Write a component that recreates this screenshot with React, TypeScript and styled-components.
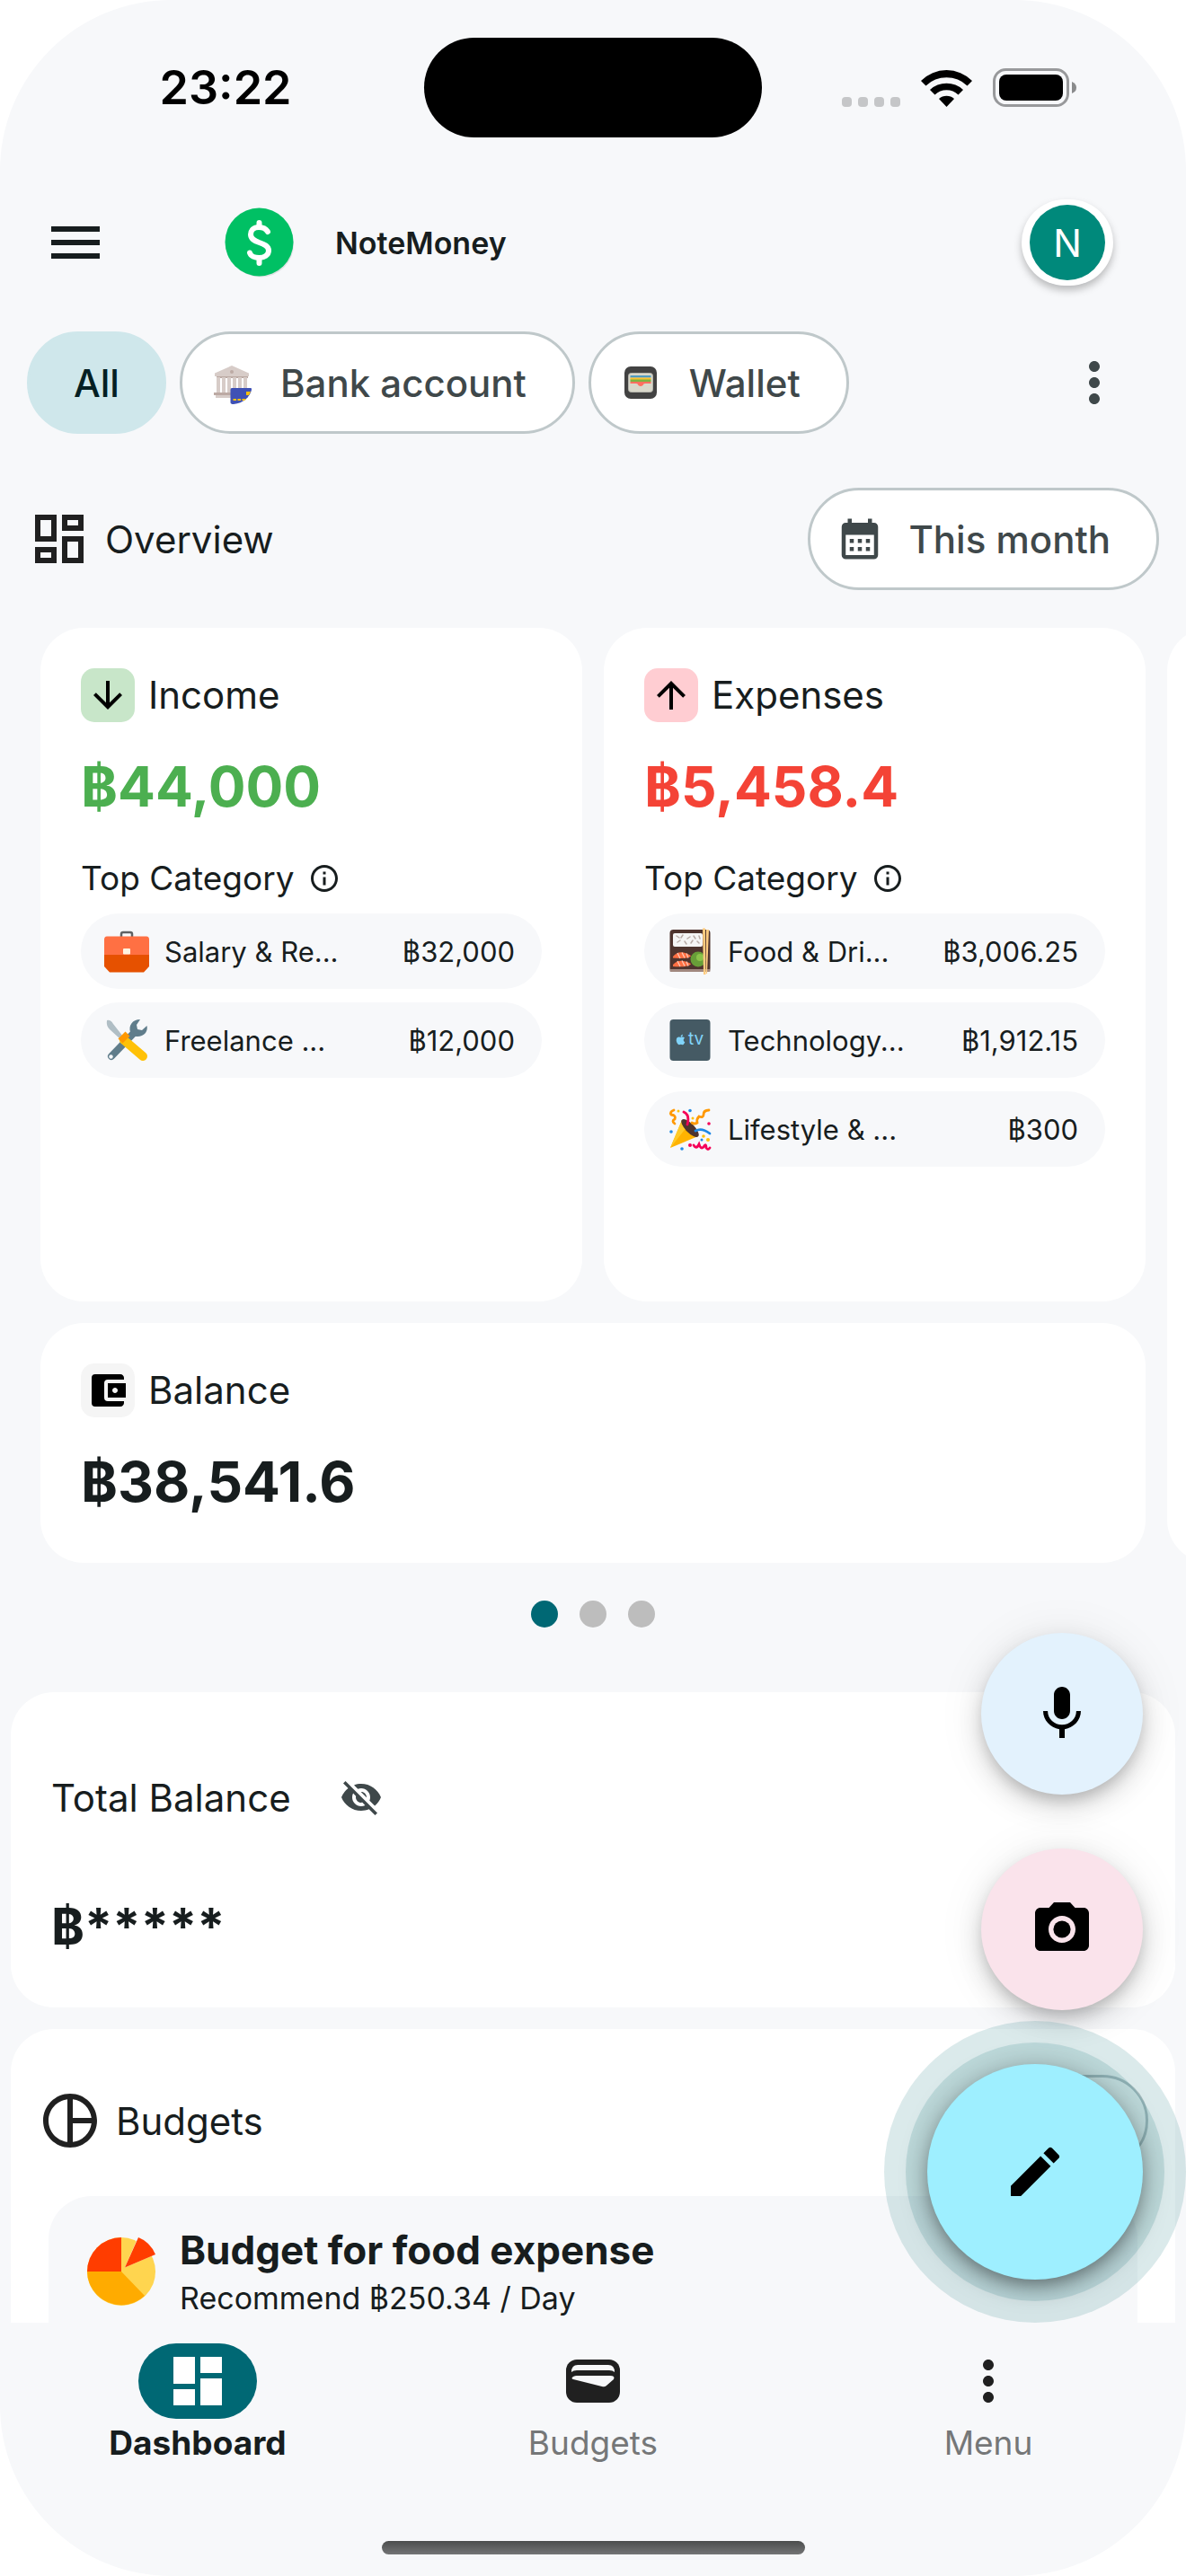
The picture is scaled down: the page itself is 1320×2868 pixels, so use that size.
import React from 'react';
import styled, { createGlobalStyle } from 'styled-components';
import {
  MdAccountBalanceWallet,
  MdArrowDownward,
  MdArrowUpward,
  MdCalendarMonth,
  MdCameraAlt,
  MdDashboard,
  MdEdit,
  MdInfoOutline,
  MdMenu,
  MdMic,
  MdMoreVert,
  MdOutlineDashboard,
  MdVisibilityOff,
} from 'react-icons/md';
import { FaApple } from 'react-icons/fa';

const color = {
  page: '#f7f8fa',
  card: '#ffffff',
  text: '#171d1e',
  muted: '#3f484a',
  faint: '#757778',
  icon: '#202020',
  outline: '#bfc8ca',
  primary: '#006874',
  income: '#4caf50',
  expense: '#f44336',
};

const GlobalStyle = createGlobalStyle`
  *, *::before, *::after { box-sizing: border-box; }
  body {
    margin: 0;
    background: #ffffff;
    color: ${color.text};
    font-family: Inter, "Noto Sans", "Liberation Sans", sans-serif;
    font-size: 42px;
  }
  h1, h2, h3, p, ul { margin: 0; padding: 0; font: inherit; }
  ul { list-style: none; }
  svg { display: block; flex: none; }
  button {
    border: 0;
    padding: 0;
    background: none;
    color: inherit;
    font: inherit;
    cursor: pointer;
  }
`;

/* ---------- shell ---------- */

const Screen = styled.div`
  display: flex;
  flex-direction: column;
  height: 100vh;
  overflow: hidden;
  border-radius: 190px;
  background: ${color.page};
`;

const StatusBar = styled.div`
  display: grid;
  grid-template-columns: 1fr 376px 1fr;
  align-items: center;
  flex: none;
  height: 194px;
`;

const Clock = styled.time`
  padding-left: 30px;
  text-align: center;
  color: #000;
  font-size: 52px;
  font-weight: 600;
`;

const Island = styled.div`
  height: 111px;
  border-radius: 56px;
  background: #000;
`;

const Signals = styled.div`
  display: flex;
  justify-content: flex-end;
  align-items: flex-end;
  gap: 23px;
  padding-right: 122px;
`;

const Header = styled.header`
  display: flex;
  align-items: center;
  flex: none;
  height: 152px;
  padding: 0 81px 0 48px;
`;

const Brand = styled.div`
  display: flex;
  align-items: center;
  gap: 45px;
  margin-left: 130px;
  font-size: 34px;
  font-weight: 600;
`;

const AvatarButton = styled.button`
  display: grid;
  place-items: center;
  width: 102px;
  height: 96px;
  margin-left: auto;
  border-radius: 48px;
  background: #fff;
  box-shadow: 0 5px 9px rgba(0, 0, 0, 0.25);
`;

const Avatar = styled.span`
  display: grid;
  place-items: center;
  width: 84px;
  height: 84px;
  border-radius: 50%;
  background: #00897b;
  color: #fff;
`;

const Body = styled.div`
  position: relative;
  display: flex;
  flex-direction: column;
  flex: 1;
  min-height: 0;
`;

const Scroller = styled.main`
  flex: 1;
  min-height: 0;
  overflow: hidden auto;
  scrollbar-width: none;
  padding-top: 23px;
`;

/* ---------- filters ---------- */

const FilterRow = styled.div`
  display: flex;
  align-items: center;
  gap: 15px;
  padding: 0 66px 0 30px;
`;

const Chip = styled.button<{ $selected?: boolean; $plain?: boolean }>`
  display: flex;
  align-items: center;
  gap: 27px;
  height: 114px;
  padding: ${(p) => (p.$plain ? '0 49px' : '0 51px 0 28px')};
  border: 3px solid ${(p) => (p.$selected ? '#cfe7eb' : color.outline)};
  border-radius: 57px;
  background: ${(p) => (p.$selected ? '#cfe7eb' : color.card)};
  color: ${(p) => (p.$selected ? '#051f23' : color.muted)};
  font-weight: 500;
  white-space: nowrap;
`;

const MoreButton = styled.button`
  margin-left: auto;
  color: ${color.muted};
`;

/* ---------- overview ---------- */

const OverviewRow = styled.div`
  display: flex;
  align-items: center;
  justify-content: space-between;
  padding: 60px 30px 42px;
`;

const SectionTitle = styled.h2`
  display: flex;
  align-items: center;
  gap: 15px;

  svg { color: ${color.icon}; }
`;

const Carousel = styled.section`
  display: flex;
  gap: 24px;
  overflow: hidden;
  padding-left: 45px;
`;

const Slide = styled.div`
  display: grid;
  grid-template-columns: 1fr 1fr;
  gap: 24px;
  flex: 0 0 calc(100% - 45px);
`;

const Card = styled.article<{ $tall?: boolean; $wide?: boolean }>`
  min-width: 0;
  min-height: ${(p) => (p.$tall ? '750px' : '0')};
  grid-column: ${(p) => (p.$wide ? '1 / -1' : 'auto')};
  padding: 45px;
  border-radius: 48px;
  background: ${color.card};
`;

const CardTitle = styled.h3`
  display: flex;
  align-items: center;
  gap: 15px;
  line-height: 60px;
`;

const IconTile = styled.span<{ $tint: string }>`
  display: grid;
  place-items: center;
  width: 60px;
  height: 60px;
  border-radius: 15px;
  background: ${(p) => p.$tint};
  color: #000;
`;

const Amount = styled.p<{ $color?: string }>`
  margin-top: 27px;
  color: ${(p) => p.$color ?? color.text};
  font-size: 62px;
  font-weight: 700;
  line-height: 90px;
`;

const TopLabel = styled.p`
  display: flex;
  align-items: center;
  gap: 15px;
  margin: 30px 0 12px;
  font-size: 37px;
  line-height: 54px;
`;

const CategoryList = styled.ul`
  display: flex;
  flex-direction: column;
  gap: 15px;
`;

const CategoryRow = styled.li`
  display: flex;
  align-items: center;
  gap: 15px;
  height: 84px;
  padding: 0 30px 0 24px;
  border-radius: 42px;
  background: ${color.page};
  font-size: 31px;
  white-space: nowrap;
`;

const CategoryAmount = styled.span`
  margin-left: auto;
`;

const Pager = styled.div`
  display: flex;
  justify-content: center;
  gap: 24px;
  padding: 42px 0 72px;
`;

const PageDot = styled.button<{ $active?: boolean }>`
  width: 30px;
  height: 30px;
  border-radius: 50%;
  background: ${(p) => (p.$active ? color.primary : '#bdbdbd')};
`;

/* ---------- panels ---------- */

const Panels = styled.div`
  display: flex;
  flex-direction: column;
  gap: 24px;
  padding: 0 12px;
`;

const TotalPanel = styled.section`
  padding: 69px 45px 45px;
  border-radius: 48px;
  background: ${color.card};
`;

const TotalTitle = styled.div`
  display: flex;
  align-items: center;
  gap: 30px;
  margin-bottom: 51px;
`;

const EyeButton = styled.button`
  padding: 24px;
  color: ${color.muted};
`;

const HiddenAmount = styled(Amount)`
  margin-top: 0;
  font-size: 56px;
`;

const BudgetPanel = styled.section`
  padding: 51px 0 42px;
  border-radius: 48px;
  background: ${color.card};
`;

const BudgetHeader = styled.div`
  display: flex;
  align-items: center;
  justify-content: space-between;
  padding: 0 30px;
`;

const AddButton = styled.button`
  width: 180px;
  height: 102px;
  border: 3px solid ${color.outline};
  border-radius: 51px;
  background: ${color.card};
`;

const BudgetItem = styled.article`
  display: flex;
  align-items: center;
  gap: 27px;
  margin: 33px 42px 0;
  padding: 30px 43px 180px;
  border-radius: 48px;
  background: ${color.page};
`;

const BudgetName = styled.h3`
  font-size: 44px;
  font-weight: 700;
  line-height: 60px;
`;

const BudgetHint = styled.p`
  font-size: 34px;
  line-height: 48px;
`;

/* ---------- floating actions ---------- */

const ActionStack = styled.div`
  position: absolute;
  right: 48px;
  bottom: 48px;
  display: flex;
  flex-direction: column;
  align-items: flex-end;
  gap: 60px;
`;

const Action = styled.button<{ $tint: string }>`
  display: grid;
  place-items: center;
  width: 180px;
  height: 180px;
  border-radius: 50%;
  background: ${(p) => p.$tint};
  color: #000;
  box-shadow:
    0 9px 15px -3px rgba(0, 0, 0, 0.16),
    0 12px 30px rgba(0, 0, 0, 0.14),
    0 3px 54px rgba(0, 0, 0, 0.08);
`;

const MainAction = styled(Action)`
  width: 240px;
  height: 240px;
  box-shadow:
    0 9px 15px -3px rgba(0, 0, 0, 0.2),
    0 6px 30px rgba(0, 0, 0, 0.36),
    0 0 0 24px rgba(0, 104, 112, 0.14),
    0 0 0 48px rgba(0, 104, 112, 0.14);
`;

/* ---------- bottom navigation ---------- */

const BottomBar = styled.footer`
  display: flex;
  flex-direction: column;
  align-items: center;
  justify-content: space-between;
  flex: none;
  height: 282px;
  padding: 23px 0 24px;
`;

const Nav = styled.nav`
  display: grid;
  grid-template-columns: repeat(3, 1fr);
  width: 100%;
`;

const NavItem = styled.a<{ $active?: boolean }>`
  display: flex;
  flex-direction: column;
  align-items: center;
  color: ${(p) => (p.$active ? color.text : color.faint)};
  font-size: 37px;
  font-weight: ${(p) => (p.$active ? 700 : 400)};
  line-height: 54px;
  text-decoration: none;
`;

const NavIcon = styled.span<{ $active?: boolean }>`
  display: grid;
  place-items: center;
  width: 132px;
  height: 84px;
  border-radius: 42px;
  background: ${(p) => (p.$active ? color.primary : 'transparent')};
  color: ${(p) => (p.$active ? '#fff' : color.icon)};
`;

const HomeIndicator = styled.div`
  width: 471px;
  height: 15px;
  border-radius: 8px;
  background: linear-gradient(#4b4d4d, #747576);
`;

/* ---------- drawings ---------- */

const CellularDots = () => (
  <svg width="65" height="11" viewBox="0 0 65 11" fill="#c5c6c8" aria-hidden="true">
    {[0, 18, 36, 54].map((x) => (
      <rect key={x} x={x} width="11" height="11" rx="4" />
    ))}
  </svg>
);

const Wifi = () => (
  <svg width="57" height="42" viewBox="0 0 57 42" aria-hidden="true">
    <path d="M0 13 A40 40 0 0 1 57 13 L51.5 18.5 A33 33 0 0 0 5.500 18.500 Z" />
    <path d="M10 23 A27 27 0 0 1 47 23 L41.500 28.500 A19 19 0 0 0 15.500 28.500 Z" />
    <path d="M20 33 A13 13 0 0 1 37 33 L28.500 42 Z" />
  </svg>
);

const Battery = () => (
  <svg width="93" height="43" viewBox="0 0 93 43" aria-hidden="true">
    <rect x="1.500" y="1.500" width="82" height="40" rx="13" fill="none" stroke="#98999b" strokeWidth="3" />
    <rect x="7" y="7" width="71" height="29" rx="8" />
    <path d="M88 15 Q93 17 93 21.500 Q93 26 88 28 Z" fill="#8a8b8c" />
  </svg>
);

const Logo = () => (
  <svg width="78" height="78" viewBox="0 0 78 78" aria-hidden="true">
    <circle cx="40" cy="40.500" r="37" fill="#dfe1e3" />
    <circle cx="38.500" cy="38.500" r="38" fill="#00c064" />
    <g fill="none" stroke="#fff" strokeWidth="6" strokeLinecap="round" strokeLinejoin="round">
      <path d="M48 27 C46 23.500 42 22 38 22 C32.500 22 29 25.500 29 30 C29 35 33 37 38.500 39 C44.500 41 49 43 49 48 C49 53 44 56 38.500 56 C33.500 56 29 54 28 50.500" />
      <path d="M38.500 17 V22 M38.500 56 V62" />
    </g>
  </svg>
);

const BankIcon = () => (
  <svg width="54" height="54" viewBox="0 0 54 54" aria-hidden="true">
    <path d="M27 8 L46 16.500 V20 H8 V16.500 Z" fill="#d7ccc8" />
    <circle cx="27" cy="15" r="2" fill="#bcaaa4" />
    <rect x="10" y="20" width="35" height="2" fill="#bcaaa4" />
    {[10, 16, 22, 28, 34, 40].map((x) => (
      <rect key={x} x={x} y="21" width="4" height="17" fill="#d7ccc8" />
    ))}
    <rect x="7" y="38" width="39" height="3" fill="#bcaaa4" />
    <rect x="9" y="41" width="36" height="3" fill="#d7ccc8" />
    <path d="M27 33 H48 Q49.500 33 49 35 C47 43 40 50 29 51 Q25.500 51 25.500 49 V35 Q25.500 33 27 33 Z" fill="#3f51b5" />
    <path d="M43 37 H48 L46 41 H43 Z M28.500 45 H32 V47 H28.500 Z M33.500 45 H37 V47 H33.500 Z M38.500 45 H43 L41 47 H38.500 Z" fill="#ffc107" />
  </svg>
);

const WalletIcon = () => (
  <svg width="54" height="54" viewBox="0 0 54 54" aria-hidden="true">
    <rect x="9" y="9" width="36" height="36" rx="7" fill="#424242" />
    <rect x="13.500" y="16.500" width="27" height="21" rx="3" fill="#d9d8cb" stroke="#b5b5ad" />
    <rect x="15.500" y="19" width="23" height="2.500" fill="#4f9bc0" />
    <rect x="15.500" y="21.500" width="23" height="2.500" fill="#fbc02d" />
    <rect x="15.500" y="23.500" width="23" height="2.500" fill="#7cb342" />
    <path d="M15.500 26 H38.500 V28 H32 Q30 28 29.500 30 Q27 32 24.500 30 Q24 28 22 28 H15.500 Z" fill="#ff6f60" />
  </svg>
);

const BriefcaseIcon = () => (
  <svg width="54" height="54" viewBox="0 0 54 54" aria-hidden="true">
    <path d="M21 11 V8 Q21 6 23 6 H31 Q33 6 33 8 V11" fill="none" stroke="#5f6264" strokeWidth="2.500" />
    <path d="M2 28 H52 V44 L46 50.500 H8 L2 44 Z" fill="#e65100" />
    <path d="M5 10.500 H49 Q52 10.500 52 14 V31 H2 V14 Q2 10.500 5 10.500 Z" fill="#ff7043" />
    <rect x="23" y="24" width="8" height="6.500" rx="1" fill="#fff3e0" />
  </svg>
);

const ToolsIcon = () => (
  <svg width="54" height="54" viewBox="0 0 54 54" aria-hidden="true">
    <path d="M10 45 L36 18" stroke="#607d8b" strokeWidth="8" strokeLinecap="round" />
    <path d="M42 4 C33 4 29 11 31 18 C33 24 43 25 48 19 C50 16 50 13 49.500 11 L44 16 L39 15 L38 10 Z" fill="#607d8b" />
    <circle cx="9.500" cy="45.500" r="2.200" fill="#f7f8fa" />
    <path d="M5 5 Q9 4 12 9 L23 23 L20 26 L8 15 Q4 11 5 5 Z" fill="#b0bec5" />
    <path d="M24 27 L45 45" stroke="#ffc107" strokeWidth="10" strokeLinecap="round" />
    <path d="M20 28 L28 20" stroke="#ff9800" strokeWidth="7" />
  </svg>
);

const BentoIcon = () => (
  <svg width="54" height="54" viewBox="0 0 54 54" aria-hidden="true">
    <rect x="4.500" y="3" width="45" height="47" rx="4" fill="#4e342e" />
    <rect x="4.500" y="47" width="45" height="3" rx="1" fill="#a1887f" />
    <rect x="8" y="7" width="33" height="15" rx="2" fill="#f5f5f5" />
    <path d="M12 10 l3 2 M19 9 l-2 3 M24 13 l3 -2 M31 10 l2 3 M13 17 l3 -2 M21 16 l2 3 M28 18 l2 -3 M35 16 l2 2 M37 10 l1 3" stroke="#b8aca7" strokeWidth="1.500" strokeLinecap="round" />
    <path d="M8 33 Q15 24 28 32 Q27 36 8 34.500 Z M8 42 Q15 34 28 41 Q27 45 8 44 Z" fill="#ff7043" />
    <path d="M13 29 l3 6 M18 28.500 l3 6 M23 29.500 l2 5 M13 38 l3 6 M18 37.500 l3 6 M23 38.500 l2 5" stroke="#ffccbc" strokeWidth="1.200" />
    <circle cx="36" cy="36" r="8.500" fill="#689f38" />
    <circle cx="38" cy="34" r="4" fill="#8bc34a" />
    <path d="M41 1.500 h3 l.5 51.500 h-2.500 Z M45 3 h3 l-2 49 h-1 Z" fill="#ffcc80" />
  </svg>
);

const AppleTvIcon = () => (
  <svg width="54" height="54" viewBox="0 0 54 54" aria-hidden="true">
    <rect x="4.500" y="4" width="45" height="46" rx="4" fill="#455a64" />
    <FaApple x={10} y={20} size={13} color="#81d4fa" />
    <text x="25" y="32" fill="#81d4fa" fontFamily="Inter, sans-serif" fontSize="19">tv</text>
  </svg>
);

const PartyIcon = () => (
  <svg width="54" height="54" viewBox="0 0 54 54" aria-hidden="true">
    <path d="M5 48 L18 17 L36 35 Z" fill="#ffb300" />
    <path d="M5 48 L18 17 L24 24 Z" fill="#ffca28" />
    <ellipse cx="27" cy="26" rx="13" ry="5" transform="rotate(46 27 26)" fill="#4e342e" />
    <g fill="none" strokeLinecap="round" strokeWidth="2.800">
      <path d="M9 6 Q4 8 6 11 Q12 12 10 16 Q6 18 10 21" stroke="#ff9800" />
      <path d="M48 6 Q42 6 42 11 Q42 15 37 13 Q34 16 35 20 Q32 22 29 20" stroke="#ff9800" />
      <path d="M20 8 Q27 11 24 22" stroke="#f50057" />
      <path d="M33 29 Q40 25 49 32" stroke="#1e88e5" />
      <path d="M31 45 Q34 50 37 44 Q39 50 42 47 Q45 42 45 48 Q47 51 49 48" stroke="#f50057" />
    </g>
    <g fill="#ffc107">
      <circle cx="14" cy="7" r="1.500" />
      <circle cx="42" cy="35" r="1.800" />
      <circle cx="47" cy="39" r="2" />
      <circle cx="30" cy="15" r="1.500" />
    </g>
    <g fill="#1e88e5">
      <circle cx="27" cy="6.500" r="1.800" />
      <circle cx="6" cy="30" r="1.800" />
      <circle cx="18" cy="49" r="1.800" />
      <circle cx="40" cy="39" r="1.500" />
    </g>
    <g fill="#f50057">
      <circle cx="48" cy="21" r="1.800" />
      <circle cx="27" cy="45" r="2" />
    </g>
  </svg>
);

const PieOutline = () => (
  <svg width="72" height="72" viewBox="0 0 24 24" fill="currentColor" aria-hidden="true">
    <path d="M12 2C6.480 2 2 6.480 2 12s4.480 10 10 10 10-4.480 10-10S17.520 2 12 2zm1 2.070c3.610.450 6.480 3.330 6.930 6.930H13V4.070zM4 12c0-4.060 3.070-7.440 7-7.930v15.870c-3.930-.500-7-3.880-7-7.940zm9 7.930V13h6.930A8.002 8.002 0 0 1 13 19.930z" />
  </svg>
);

const PieIcon = () => (
  <svg width="76" height="76" viewBox="0 0 76 76" aria-hidden="true">
    <circle cx="38" cy="38" r="38" fill="#ffd54f" />
    <path d="M38 38 H0 A38 38 0 0 0 64 65 Z" fill="#ffab00" />
    <path d="M38 38 V0 A38 38 0 0 0 0 38 Z" fill="#ff3d00" />
    <path d="M56.500 0 H76 V19 L42 33.500 Z" fill="#f7f8fa" />
    <path d="M42 33.500 L57 0 Q70 5 76 19 Z" fill="#ff3d00" />
  </svg>
);

const BudgetsNavIcon = () => (
  <svg width="60" height="48" viewBox="0 0 60 48" aria-hidden="true">
    <rect width="60" height="48" rx="12" fill="#202020" />
    <path d="M6 14 Q6 6 13 6 H47 Q54 6 54 14 Q52 12 48 12 H12 Q8 12 6 14 Z" fill="#f7f8fa" />
    <path d="M12 18 H49 Q55 18 53 22 L45 29 Q43 31 40 30 L8 22 Q5 21 8 19 Q10 18 12 18 Z" fill="#f7f8fa" />
  </svg>
);

/* ---------- data ---------- */

type Category = { name: string; amount: string; icon: React.ReactNode };

const incomeCategories: Category[] = [
  { name: 'Salary & Re...', amount: '฿32,000', icon: <BriefcaseIcon /> },
  { name: 'Freelance ...', amount: '฿12,000', icon: <ToolsIcon /> },
];

const expenseCategories: Category[] = [
  { name: 'Food & Dri...', amount: '฿3,006.25', icon: <BentoIcon /> },
  { name: 'Technology...', amount: '฿1,912.15', icon: <AppleTvIcon /> },
  { name: 'Lifestyle & ...', amount: '฿300', icon: <PartyIcon /> },
];

type SummaryProps = {
  title: string;
  amount: string;
  tint: string;
  amountColor: string;
  icon: React.ReactNode;
  categories: Category[];
};

const SummaryCard = ({ title, amount, tint, amountColor, icon, categories }: SummaryProps) => (
  <Card $tall>
    <CardTitle>
      <IconTile $tint={tint}>{icon}</IconTile>
      {title}
    </CardTitle>
    <Amount $color={amountColor}>{amount}</Amount>
    <TopLabel>
      Top Category
      <MdInfoOutline size={36} />
    </TopLabel>
    <CategoryList>
      {categories.map((c) => (
        <CategoryRow key={c.name}>
          {c.icon}
          <span>{c.name}</span>
          <CategoryAmount>{c.amount}</CategoryAmount>
        </CategoryRow>
      ))}
    </CategoryList>
  </Card>
);

export default function App() {
  return (
    <>
      <GlobalStyle />
      <Screen>
        <StatusBar>
          <Clock>23:22</Clock>
          <Island />
          <Signals>
            <CellularDots />
            <Wifi />
            <Battery />
          </Signals>
        </StatusBar>

        <Header>
          <button aria-label="Open menu">
            <MdMenu size={72} />
          </button>
          <Brand>
            <Logo />
            <h1>NoteMoney</h1>
          </Brand>
          <AvatarButton aria-label="Account">
            <Avatar>N</Avatar>
          </AvatarButton>
        </Header>

        <Body>
          <Scroller>
            <FilterRow>
              <Chip $selected $plain>All</Chip>
              <Chip>
                <BankIcon />
                Bank account
              </Chip>
              <Chip>
                <WalletIcon />
                Wallet
              </Chip>
              <MoreButton aria-label="More filters">
                <MdMoreVert size={72} />
              </MoreButton>
            </FilterRow>

            <OverviewRow>
              <SectionTitle>
                <MdOutlineDashboard size={72} />
                Overview
              </SectionTitle>
              <Chip>
                <MdCalendarMonth size={54} />
                This month
              </Chip>
            </OverviewRow>

            <Carousel aria-label="Overview">
              <Slide>
                <SummaryCard
                  title="Income"
                  amount="฿44,000"
                  tint="#c8e6c9"
                  amountColor={color.income}
                  icon={<MdArrowDownward size={48} />}
                  categories={incomeCategories}
                />
                <SummaryCard
                  title="Expenses"
                  amount="฿5,458.4"
                  tint="#ffcdd2"
                  amountColor={color.expense}
                  icon={<MdArrowUpward size={48} />}
                  categories={expenseCategories}
                />
                <Card $wide>
                  <CardTitle>
                    <IconTile $tint="#f5f5f5">
                      <MdAccountBalanceWallet size={48} />
                    </IconTile>
                    Balance
                  </CardTitle>
                  <Amount>฿38,541.6</Amount>
                </Card>
              </Slide>
              <Slide>
                <Card $wide />
              </Slide>
            </Carousel>

            <Pager>
              <PageDot $active aria-label="Page 1" />
              <PageDot aria-label="Page 2" />
              <PageDot aria-label="Page 3" />
            </Pager>

            <Panels>
              <TotalPanel>
                <TotalTitle>
                  <h2>Total Balance</h2>
                  <EyeButton aria-label="Show balance">
                    <MdVisibilityOff size={48} />
                  </EyeButton>
                </TotalTitle>
                <HiddenAmount>฿*****</HiddenAmount>
              </TotalPanel>

              <BudgetPanel>
                <BudgetHeader>
                  <SectionTitle>
                    <PieOutline />
                    Budgets
                  </SectionTitle>
                  <AddButton aria-label="Add budget" />
                </BudgetHeader>
                <BudgetItem>
                  <PieIcon />
                  <div>
                    <BudgetName>Budget for food expense</BudgetName>
                    <BudgetHint>Recommend ฿250.34 / Day</BudgetHint>
                  </div>
                </BudgetItem>
              </BudgetPanel>
            </Panels>
          </Scroller>

          <ActionStack>
            <Action $tint="#e3f2fd" aria-label="Record by voice">
              <MdMic size={72} />
            </Action>
            <Action $tint="#fae3eb" aria-label="Scan a receipt">
              <MdCameraAlt size={72} />
            </Action>
            <MainAction $tint="#9eefff" aria-label="Write a note">
              <MdEdit size={72} />
            </MainAction>
          </ActionStack>
        </Body>

        <BottomBar>
          <Nav>
            <NavItem href="#dashboard" $active aria-current="page">
              <NavIcon $active>
                <MdDashboard size={72} />
              </NavIcon>
              Dashboard
            </NavItem>
            <NavItem href="#budgets">
              <NavIcon>
                <BudgetsNavIcon />
              </NavIcon>
              Budgets
            </NavItem>
            <NavItem href="#menu">
              <NavIcon>
                <MdMoreVert size={72} />
              </NavIcon>
              Menu
            </NavItem>
          </Nav>
          <HomeIndicator />
        </BottomBar>
      </Screen>
    </>
  );
}
